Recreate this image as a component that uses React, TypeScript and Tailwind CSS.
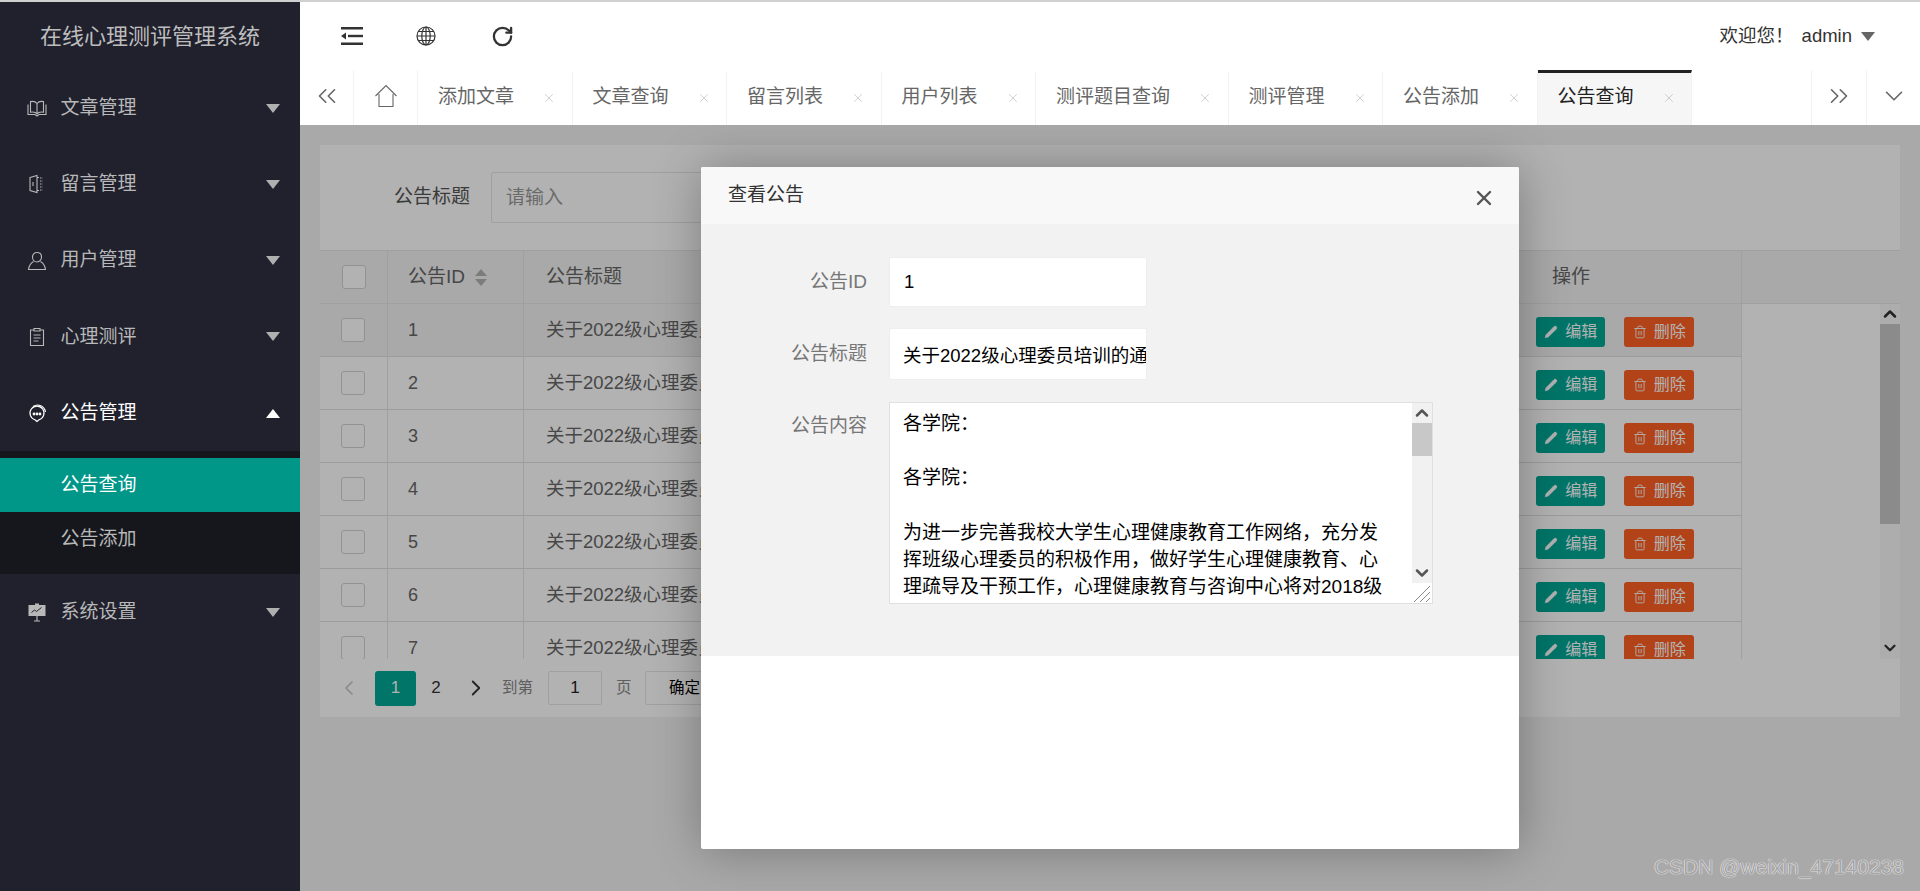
import { ChevronDown, ChevronLeft, ChevronRight, ChevronUp, ChevronsLeft, ChevronsRight, Pencil, RotateCw, Trash2, X } from "lucide-react";
import type { ReactNode } from "react";

const tabs = ["添加文章", "文章查询", "留言列表", "用户列表", "测评题目查询", "测评管理", "公告添加", "公告查询"];
const rows = [1, 2, 3, 4, 5, 6, 7];

function BookIcon() {
  return (
    <svg viewBox="0 0 20 20" className="h-5 w-5" fill="none" stroke="currentColor" strokeWidth="1.1">
      <path d="M10 5.5C8.5 3.5 5.5 3.2 3.5 3.6v10.6c2.2-.4 5-.2 6.5 1.6 1.5-1.8 4.300-2 6.500-1.600V3.600C14.500 3.200 11.500 3.500 10 5.500zM10 5.500v10.300" />
      <path d="M1 6.500v10h7l2 1.500 2-1.500h7v-10" />
    </svg>
  );
}

function BoardIcon() {
  return (
    <svg viewBox="0 0 20 20" className="h-5 w-5" fill="none" stroke="currentColor" strokeWidth="1.1">
      <path d="M3 3.500l7-2v17l-7-2zM3 3.500h1M10 3.500h2M10 16.500h2" />
      <path d="M6 8v4" />
      <path d="M13 4h3M13 7h3M13 10h3M13 13h3M13 16h3" strokeDasharray="1.500 1.200" />
    </svg>
  );
}

function UserIcon() {
  return (
    <svg viewBox="0 0 20 20" className="h-5 w-5" fill="none" stroke="currentColor" strokeWidth="1.1">
      <path d="M10 1.500c2.800 0 4.500 2 4.500 4.500S12.800 11 10 11 5.500 8.500 5.500 6s1.700-4.500 4.500-4.500z" />
      <path d="M6.500 10.500C4 12 2 15 1.500 18.500h17c-.5-3.500-2.500-6.500-5-8" />
    </svg>
  );
}

function ClipIcon() {
  return (
    <svg viewBox="0 0 20 20" className="h-5 w-5" fill="none" stroke="currentColor" strokeWidth="1.100">
      <path d="M7 3H3.500v15.500h13V3H13M7 1.500h6V4H7zM6.500 8h7M6.500 11h7M6.500 14h5" />
    </svg>
  );
}

function ChatIcon() {
  return (
    <svg viewBox="0 0 20 20" className="h-5 w-5" fill="none" stroke="currentColor" strokeWidth="1.200">
      <path d="M10 18.500l-2-1.700a7 7 0 1 1 4 0z" />
      <path d="M6 3.500a8 8 0 0 1 12.500 5.500" />
      <circle cx="7" cy="11" r=".8" fill="currentColor" />
      <circle cx="10" cy="11" r=".8" fill="currentColor" />
      <circle cx="13" cy="11" r=".8" fill="currentColor" />
    </svg>
  );
}

function ChartBoardIcon() {
  return (
    <svg viewBox="0 0 20 20" className="h-5 w-5" fill="currentColor">
      <path d="M8 1.500h4V3h6.500v11h-17V3H8z" />
      <path d="M9.400 14h1.200v4.500H13v1H7v-1h2.400z" />
      <path d="M4.500 10.500l3-2.500 2 1.500 5-4" fill="none" stroke="#20212d" strokeWidth="1" />
    </svg>
  );
}

function IndentIcon() {
  return (
    <svg viewBox="0 0 22 18" className="h-[18px] w-[22px]" fill="#333">
      <rect x="0" y="0" width="22" height="2.500" />
      <rect x="0" y="15.500" width="22" height="2.500" />
      <rect x="7" y="7.800" width="15" height="2.400" />
      <path d="M0 9l5-3.500v7z" />
    </svg>
  );
}

function GlobeIcon() {
  return (
    <svg viewBox="0 0 20 20" className="h-5 w-5" fill="none" stroke="#333" strokeWidth="1.200">
      <circle cx="10" cy="10" r="9" />
      <ellipse cx="10" cy="10" rx="4.200" ry="9" />
      <path d="M10 1v18M1 10h18M2.200 5.500h15.600M2.200 14.500h15.600" />
    </svg>
  );
}

function HomeIcon() {
  return (
    <svg viewBox="0 0 24 24" className="h-6 w-6" fill="none" stroke="#666" strokeWidth="1.100">
      <path d="M1.500 12L12 1.500 22.500 12M5 10v12.500h14V10" />
    </svg>
  );
}

function Caret({ up, className }: { up?: boolean; className: string }) {
  return (
    <span
      className={`h-0 w-0 border-x-[7.500px] border-x-transparent ${up ? "border-b-[9px]" : "border-t-[9px]"} ${className}`}
    />
  );
}

function MenuItem({ icon, label, open }: { icon: ReactNode; label: string; open?: boolean }) {
  return (
    <div className={`flex h-[76.250px] shrink-0 items-center pl-[27px] pr-[20px] ${open ? "text-white" : "text-[#b8b8b8]"}`}>
      <span className="w-[20px]">{icon}</span>
      <span className="ml-[13.500px] flex-1 text-[19px]">{label}</span>
      {open ? <Caret up className="border-b-white" /> : <Caret className="border-t-[#b0b0b0]" />}
    </div>
  );
}

function Sidebar() {
  return (
    <aside className="flex w-[300px] shrink-0 flex-col bg-[#20212d]">
      <div className="flex h-[68px] shrink-0 items-center justify-center text-[22px] text-[#bdbdbd]">在线心理测评管理系统</div>
      <MenuItem icon={<BookIcon />} label="文章管理" />
      <MenuItem icon={<BoardIcon />} label="留言管理" />
      <MenuItem icon={<UserIcon />} label="用户管理" />
      <MenuItem icon={<ClipIcon />} label="心理测评" />
      <MenuItem icon={<ChatIcon />} label="公告管理" open />
      <div className="bg-[#16171d] pb-[8px] pt-[7px] text-[19px]">
        <div className="flex h-[54px] items-center bg-[#009688] pl-[60.500px] text-white">公告查询</div>
        <div className="flex h-[54px] items-center pl-[60.500px] text-[#b8b8b8]">公告添加</div>
      </div>
      <MenuItem icon={<ChartBoardIcon />} label="系统设置" />
    </aside>
  );
}

function TopBar() {
  return (
    <div className="flex h-[68px] shrink-0 items-center bg-white">
      <span className="ml-[41px] w-[76px]"><IndentIcon /></span>
      <span className="ml-[-1px] w-[76px]"><GlobeIcon /></span>
      <RotateCw className="ml-[-1px] h-[23px] w-[23px] text-[#333]" strokeWidth={2.400} />
      <div className="ml-auto mr-[45px] flex items-center text-[#333]">
        <span className="text-[18.500px]">欢迎您！</span>
        <span className="ml-[8px] text-[18.500px]">admin</span>
        <Caret className="ml-[9px] border-t-[#666]" />
      </div>
    </div>
  );
}

function TabStrip() {
  return (
    <div className="flex h-[55px] shrink-0 bg-white">
      <div className="flex w-[54px] items-center justify-center border-r border-[#f2f2f2] pb-[3px]">
        <ChevronsLeft className="h-[30px] w-[30px] text-[#666]" strokeWidth={1.300} />
      </div>
      <div className="flex w-[64px] items-center justify-center border-r border-[#f2f2f2] pb-[4px]"><HomeIcon /></div>
      {tabs.map((tab, i) => {
        const active = i === tabs.length - 1;
        return (
          <div
            key={tab}
            className={`flex items-center border-r border-t-[3px] border-r-[#f2f2f2] pb-[3px] pl-[20px] pr-[15.500px] ${active ? "border-t-[#222] bg-[#f6f6f6] text-[#222]" : "border-t-transparent text-[#666]"}`}
          >
            <span className="text-[19px]">{tab}</span>
            <X className="ml-[28px] h-[14px] w-[14px] text-[#bbb]" strokeWidth={1.200} />
          </div>
        );
      })}
      <div className="ml-auto flex w-[55px] items-center justify-center border-l border-[#f2f2f2] pb-[3px]">
        <ChevronsRight className="h-[30px] w-[30px] text-[#666]" strokeWidth={1.300} />
      </div>
      <div className="flex w-[54px] items-center justify-center border-l border-[#f2f2f2] pb-[3px]">
        <ChevronDown className="h-[30px] w-[30px] text-[#666]" strokeWidth={1.300} />
      </div>
    </div>
  );
}

function NoticeTable() {
  return (
    <>
      <div className="flex h-[105px] items-center bg-white pl-[74px]">
        <span className="text-[19px] text-[#555]">公告标题</span>
        <input
          placeholder="请输入"
          className="ml-[21px] h-[51px] w-[300px] rounded-[2px] border border-[#e6e6e6] pl-[14px] text-[19px] placeholder:text-[#999]"
        />
      </div>

      <div className="flex h-[54px] items-center border-y border-[#e6e6e6] bg-[#f2f2f2] text-[19px] text-[#666]">
        <div className="flex h-full w-[68px] items-center justify-center border-r border-[#e6e6e6]">
          <span className="h-[24px] w-[24px] rounded-[3px] border border-[#d2d2d2] bg-white" />
        </div>
        <div className="flex h-full w-[136px] items-center border-r border-[#e6e6e6] pl-[20px]">
          公告ID
          <span className="ml-[10px] flex flex-col gap-[3px]">
            <span className="h-0 w-0 border-x-[6px] border-b-[7px] border-x-transparent border-b-[#b2b2b2]" />
            <span className="h-0 w-0 border-x-[6px] border-t-[7px] border-x-transparent border-t-[#b2b2b2]" />
          </span>
        </div>
        <div className="flex h-full w-[996px] items-center pl-[22px]">公告标题</div>
        <div className="flex h-full w-[222px] items-center border-r border-[#e6e6e6] pl-[32px]">操作</div>
      </div>

      <div className="flex h-[355px] bg-white">
        <div className="h-full w-[1422px] overflow-hidden border-r border-[#e6e6e6]">
          {rows.map((n) => (
            <div
              key={n}
              className={`flex h-[53px] shrink-0 items-center border-b border-[#e0e0e0] text-[#666] ${n === 1 ? "bg-[#f2f2f2]" : ""}`}
            >
              <div className="flex h-full w-[68px] items-center justify-center border-r border-[#e6e6e6]">
                <span className="h-[24px] w-[24px] rounded-[3px] border border-[#d2d2d2] bg-white" />
              </div>
              <div className="flex h-full w-[136px] items-center border-r border-[#e6e6e6] pl-[20px] text-[18px]">{n}</div>
              <div className="w-[996px] pl-[22px] text-[18.500px]">关于2022级心理委员培训的通知</div>
              <div className="flex w-[222px] gap-[19px] pl-[17px] pt-[3px]">
                <span className="flex h-[30px] w-[69px] items-center justify-center gap-[7px] rounded-[3px] bg-[#00a896] text-[16px] text-white">
                  <Pencil className="h-[14px] w-[14px]" fill="currentColor" strokeWidth={1} />
                  编辑
                </span>
                <span className="flex h-[30px] w-[70px] items-center justify-center gap-[7px] rounded-[3px] bg-[#ff6124] text-[16px] text-white">
                  <Trash2 className="h-[14px] w-[14px]" strokeWidth={1.500} />
                  删除
                </span>
              </div>
            </div>
          ))}
        </div>
        <div className="ml-auto flex w-[20px] flex-col items-center bg-[#f8f8f8]">
          <ChevronUp className="h-[20px] w-[20px] text-[#333]" strokeWidth={3} />
          <div className="h-[200px] w-full bg-[#c8c8c8]" />
          <ChevronDown className="mt-auto h-[20px] w-[20px] pb-[2px] text-[#333]" strokeWidth={3} />
        </div>
      </div>

      <div className="flex h-[58px] items-center bg-white text-[#666]">
        <ChevronLeft className="ml-[17px] h-[24px] w-[24px] text-[#c2c2c2]" strokeWidth={1.500} />
        <span className="ml-[14px] flex h-[35px] w-[41px] items-center justify-center rounded-[3px] bg-[#00a896] text-[17px] text-white">1</span>
        <span className="w-[40px] text-center text-[17px] text-[#333]">2</span>
        <ChevronRight className="ml-[7px] h-[26px] w-[26px] text-[#333]" strokeWidth={1.700} />
        <span className="ml-[13px] text-[15.500px] text-[#888]">到第</span>
        <span className="ml-[15px] flex h-[34px] w-[54px] items-center justify-center rounded-[2px] border border-[#e6e6e6] text-[17px] text-[#222]">1</span>
        <span className="ml-[14px] text-[15.500px] text-[#888]">页</span>
        <span className="ml-[13px] flex h-[34px] w-[80px] items-center justify-center rounded-[2px] border border-[#e6e6e6] text-[15.500px] text-black">确定</span>
      </div>
    </>
  );
}

function FieldLabel({ children }: { children: ReactNode }) {
  return <span className="w-[148px] shrink-0 pr-[-0px] text-right text-[19px] text-[#777]">{children}</span>;
}

function NoticeDialog() {
  return (
    <div className="absolute left-[401px] top-[42px] flex h-[682px] w-[818px] flex-col overflow-hidden rounded-[2px] bg-white shadow-[1px_1px_50px_rgba(0,0,0,0.3)]">
      <div className="flex h-[57px] shrink-0 items-center bg-[#f8f8f8] pl-[27px] pr-[23px] text-[19px] text-[#333]">
        查看公告
        <X className="ml-auto mt-[4px] h-[24px] w-[24px] text-[#555]" strokeWidth={2.400} />
      </div>
      <div className="h-[432px] shrink-0 bg-[#f2f2f2] pl-[18px] pt-[33px]">
        <div className="flex h-[50px] items-center">
          <FieldLabel>公告ID</FieldLabel>
          <input
            readOnly
            value="1"
            className="ml-[22px] h-[50px] w-[258px] rounded-[2px] border border-[#eee] bg-white pl-[14px] text-[18.500px] text-black"
          />
        </div>
        <div className="mt-[21px] flex h-[52px] items-center">
          <FieldLabel>公告标题</FieldLabel>
          <input
            readOnly
            value="关于2022级心理委员培训的通知"
            className="ml-[22px] h-[52px] w-[258px] rounded-[2px] border border-[#eee] bg-white pl-[13px] text-[18.500px] text-black"
          />
        </div>
        <div className="mt-[22px] flex items-start">
          <FieldLabel><span className="mt-[10px] block">公告内容</span></FieldLabel>
          <div className="ml-[22px] flex h-[202px] w-[544px] border border-[#e0e0e0] bg-white">
            <div className="h-full w-[523px] overflow-hidden pl-[13px] pt-[7px] text-[19px] leading-[27.200px] text-black">
              <p className="w-[490px]">
                各学院：
                <br />
                <br />
                各学院：
                <br />
                <br />
                为进一步完善我校大学生心理健康教育工作网络，充分发挥班级心理委员的积极作用，做好学生心理健康教育、心理疏导及干预工作，心理健康教育与咨询中心将对2018级
              </p>
            </div>
            <div className="flex w-[20px] flex-col">
              <div className="flex h-[180px] flex-col items-center bg-[#f1f1f1]">
                <ChevronUp className="h-[20px] w-[20px] text-[#555]" strokeWidth={3} />
                <div className="h-[33px] w-full bg-[#c8c8c8]" />
                <ChevronDown className="mt-auto h-[20px] w-[20px] text-[#555]" strokeWidth={3} />
              </div>
              <svg viewBox="0 0 20 20" className="h-[20px] w-[20px]" fill="none" stroke="#888" strokeWidth="1">
                <path d="M2 19L18 3M8 19L18 9M14 19l4-4" />
              </svg>
            </div>
          </div>
        </div>
      </div>
    </div>
  );
}

export default function App() {
  return (
    <div className="relative flex h-screen w-full flex-col overflow-hidden bg-white font-['Liberation_Sans','Noto_Sans_CJK_SC',sans-serif]">
      <div className="h-[2px] shrink-0 bg-[#d0d0d0]" />
      <div className="flex min-h-0 flex-1">
        <Sidebar />
        <main className="flex min-w-0 flex-1 flex-col">
          <TopBar />
          <TabStrip />
          <div className="relative min-h-0 flex-1 overflow-hidden bg-[#f2f2f2] px-[20px] pt-[20px]">
            <NoticeTable />
            <div className="absolute inset-0 bg-black/30" />
            <NoticeDialog />
          </div>
        </main>
      </div>
      <span className="absolute bottom-[9px] right-[16px] text-[21px] text-[#a6a6a6] [text-shadow:0_0_1px_#fff,0_0_1px_#fff]">
        CSDN @weixin_47140238
      </span>
    </div>
  );
}
